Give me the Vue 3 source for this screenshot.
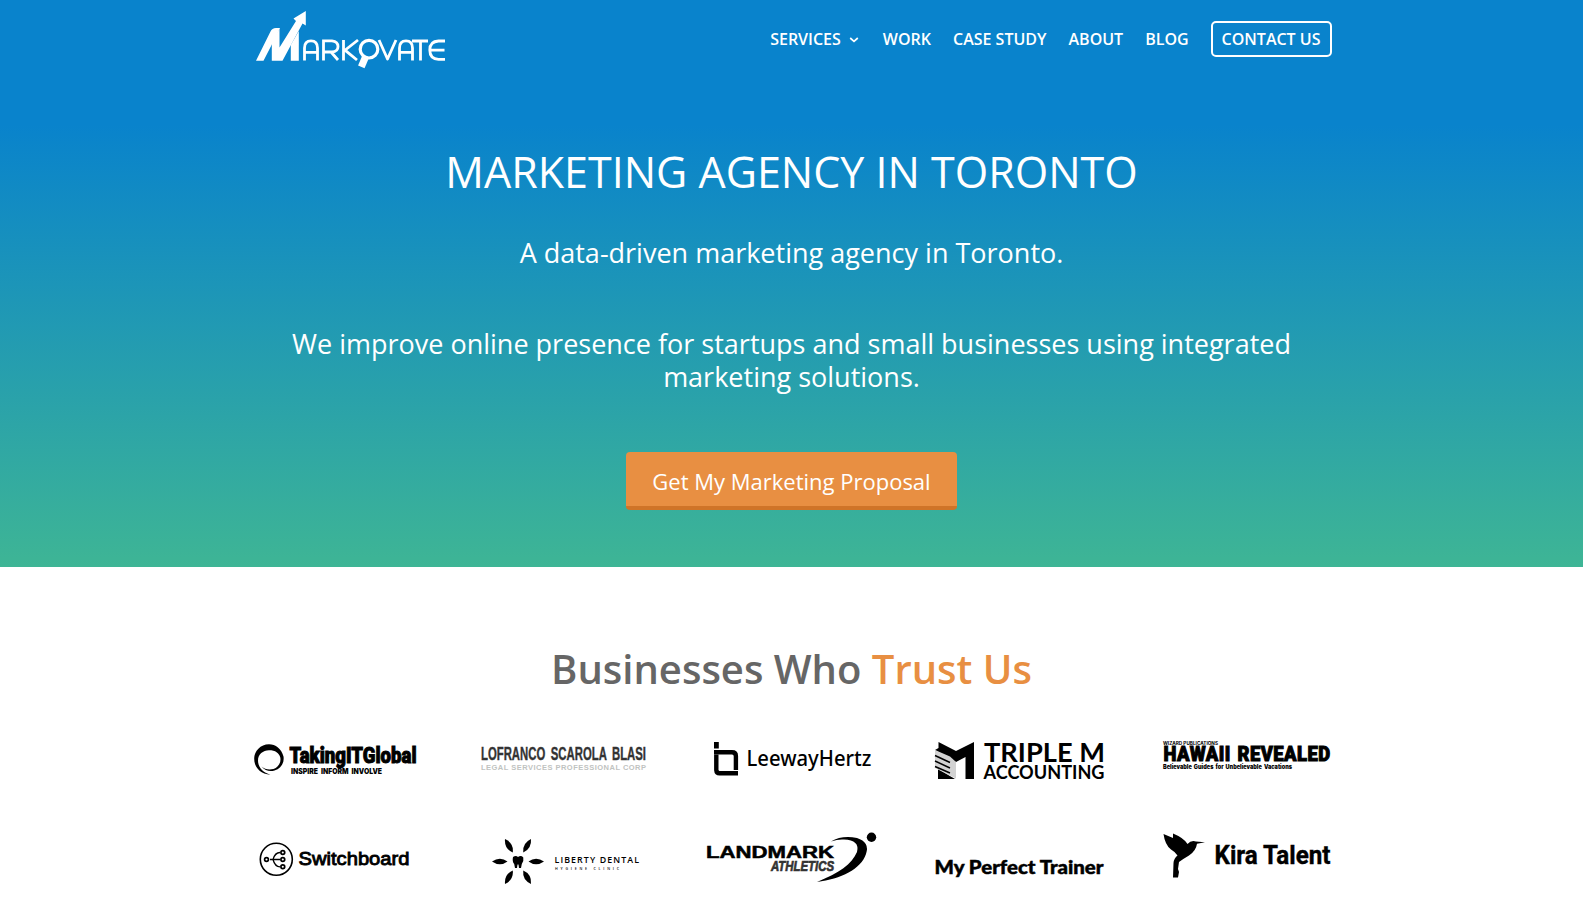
<script setup>
const links = ['WORK', 'CASE STUDY', 'ABOUT', 'BLOG']
const petals = [30, 90, 150, 210, 270, 330]
</script>

<template>
  <main class="page">
    <section class="hero">
      <header class="bar">
        <svg class="brand" width="190" height="60" viewBox="256 10 190 60" fill="none" stroke="#fff" stroke-width="2.8" role="img" aria-label="Markovate">
          <path d="M256 60.800 L270.500 31.500 Q272 28 276 28 L280 28 L277.500 33.500 L263.500 60.800 Z" fill="#fff" stroke="none" />
          <path d="M271.800 60.800 V41.500 L279.500 29 V47.500 L296 21 L293.500 18.500 L305.800 11 V25.500 L302.500 23.500 L282.500 60.800 Z" fill="#fff" stroke="none" />
          <path d="M290.800 60.800 V45 L298.800 31 V60.800 Z" fill="#fff" stroke="none" />
          <path d="M304.500 60.500 V48 Q304.500 40.800 311 40.800 Q317.500 40.800 317.500 48 V60.500 M304.500 52.300 H317.500" />
          <path d="M323.500 60.500 V40.800 H332 Q338 41.500 338 46.500 Q338 51.700 332 52 H324 M331 52 L338 60" />
          <path d="M343.500 40 V60.500 M358 40 L345 50.200 L357 60" />
          <circle cx="369" cy="49.200" r="8.800" stroke-width="3.200" />
          <path d="M365.500 57 L361.300 66.800" stroke-width="7" />
          <path d="M379 40 L387.500 59 L396 40" stroke-linejoin="round" />
          <path d="M399.500 60.500 V48 Q399.500 40.800 406 40.800 Q412.500 40.800 412.500 48 V60.500 M399.500 52.300 H412.500" />
          <path d="M412 41 H428 M420.500 41 V60.500" />
          <path d="M445 41 H438.500 Q429.800 41.500 429.800 50 Q429.800 59 438.500 59.300 H445 M430 50.200 H444.500" />
        </svg>
        <nav class="nav">
          <a class="link services">SERVICES
            <svg class="chev" width="10" height="6" viewBox="0 0 10 6"><path d="M1.200 1 L5 4.300 L8.800 1" fill="none" stroke="#fff" stroke-width="1.700" /></svg>
          </a>
          <a v-for="l in links" :key="l" class="link">{{ l }}</a>
          <a class="link contact">CONTACT US</a>
        </nav>
      </header>
      <h1 class="title">MARKETING AGENCY IN TORONTO</h1>
      <p class="lead">A data-driven marketing agency in Toronto.</p>
      <p class="lead second">We improve online presence for startups and small businesses using integrated<br />marketing solutions.</p>
      <a class="cta">Get My Marketing Proposal</a>
    </section>

    <section class="trust">
      <h2 class="heading">Businesses Who <span class="accent">Trust Us</span></h2>
      <div class="logos">
        <svg class="logo" viewBox="252 735 168 60">
          <path d="M283.500 756.500 C281.500 748.500 275.500 744.200 269 744.200 C260.500 744.200 254.200 751 254.200 758.800 C254.200 767 260 774 270.500 774.700 C263 772.500 258 767.500 258 760.500 C258 754.500 263 750.300 269 750.300 C275.500 750.300 279 753 280.300 757.500 C281.300 763 278 767.500 273.500 769 C268.500 770.200 264.500 769 261.500 766.500 C265 770.800 270 772 274.500 770.500 C281 768.500 284.500 763 283.500 756.500 Z" />
          <text class="impact" x="289.500" y="763" font-size="22.500" textLength="127" lengthAdjust="spacingAndGlyphs">TakingITGlobal</text>
          <text class="heavy" x="291" y="774" font-size="7.800" word-spacing="2" textLength="91" lengthAdjust="spacingAndGlyphs">INSPIRE INFORM INVOLVE</text>
        </svg>

        <svg class="logo" viewBox="480 735 168 60">
          <text class="arial bold thicken" x="481" y="760" font-size="18.500" textLength="165" lengthAdjust="spacingAndGlyphs" word-spacing="4">LOFRANCO SCAROLA BLASI</text>
          <text class="arial bold" x="481" y="770" font-size="7.500" fill="#bfc3c1" textLength="166" letter-spacing="1">LEGAL SERVICES PROFESSIONAL CORP</text>
        </svg>

        <svg class="logo" viewBox="708 735 168 60">
          <path d="M714 742 H718.800 V748.500 H714 Z" />
          <path d="M716.300 754.500 V770 Q716.500 773.200 719.500 773.200 H738" fill="none" stroke="#000" stroke-width="4.400" />
          <path d="M714 752.300 H732 Q735.900 752.300 735.900 756 V770" fill="none" stroke="#000" stroke-width="4.400" />
          <text class="noto" x="746.500" y="765.500" font-size="21" textLength="125" lengthAdjust="spacingAndGlyphs">LeewayHertz</text>
        </svg>

        <svg class="logo" viewBox="936 735 168 60">
          <path d="M938.500 742 L956 751 L974 742 V779 H965.500 V757 L956 762 L935 750 L938.500 748 Z" />
          <path d="M938 769 V779 H955 Z" />
          <path d="M935 750 L950 756.500 L956 762 V778.500 L935 768 Z" fill="#d2d2d2" />
          <path d="M935 755.500 L950 762.500 M935 761 L950 768 M935 766.500 L950 773" stroke="#000" stroke-width="1.500" />
          <text class="lato bold" x="984" y="761.500" font-size="27" textLength="121" lengthAdjust="spacingAndGlyphs">TRIPLE M</text>
          <text class="lato bold" x="983.500" y="778.500" font-size="18.500" textLength="121" lengthAdjust="spacingAndGlyphs">ACCOUNTING</text>
        </svg>

        <svg class="logo" viewBox="1164 735 168 60">
          <text class="inter bold" x="1163" y="745" font-size="4.700" textLength="55" lengthAdjust="spacingAndGlyphs">WIZARD PUBLICATIONS</text>
          <text class="roboto black hawaii" x="1163.500" y="761.300" font-size="20" textLength="167" word-spacing="2" letter-spacing=".5" lengthAdjust="spacingAndGlyphs">HAWAII REVEALED</text>
          <text class="inter black" x="1163" y="769.300" font-size="5.700" word-spacing="1" textLength="129" lengthAdjust="spacingAndGlyphs">Believable Guides for Unbelievable Vacations</text>
        </svg>

        <svg class="logo" viewBox="252 825 168 60">
          <g fill="none" stroke="#000">
            <circle cx="276.300" cy="859.300" r="16" stroke-width="1.600" />
            <g stroke-width="1.700">
              <circle cx="266.500" cy="859.500" r="1.900" />
              <circle cx="282.800" cy="852.500" r="1.900" />
              <circle cx="282.800" cy="859.500" r="1.900" />
              <circle cx="282.800" cy="866.800" r="1.900" />
            </g>
            <path d="M270 859.500 H280 M273 859.500 Q275 852.500 280 852.500 M273 859.500 Q275 866.800 280 866.800" stroke-width="1.300" />
          </g>
          <text class="arial switch" x="298.500" y="865" font-size="19" textLength="111" lengthAdjust="spacingAndGlyphs">Switchboard</text>
        </svg>

        <svg class="logo" viewBox="480 825 168 60">
          <g transform="translate(518 861.500)">
            <path v-for="a in petals" :key="a" :transform="`rotate(${a})`" d="M0 -26 Q5.600 -18 0 -10.500 Q-5.600 -18 0 -26 Z" />
            <path d="M-5 -4.500 Q-2 -6.500 0 -4.500 Q3 -6.500 5.300 -4 Q6 0 3.800 2.500 L3 6.500 H1 L0.500 3 H-0.500 L-1 6.500 H-3 L-3.800 2.500 Q-6 0 -5 -4.500 Z" />
          </g>
          <text class="opens semi" x="554.500" y="863" font-size="8.800" textLength="86" letter-spacing="1.500">LIBERTY DENTAL</text>
          <text class="opens semi" x="555" y="870" font-size="3.600" textLength="66" letter-spacing="2">HYGIENE CLINIC</text>
        </svg>

        <svg class="logo" viewBox="708 825 168 60">
          <text class="arial bold outline" x="706" y="858" font-size="16.800" textLength="128" lengthAdjust="spacingAndGlyphs">LANDMARK</text>
          <text class="arial bold italic" x="771" y="870.500" font-size="14.500" fill="#333" stroke="#333" stroke-width=".7" textLength="63" lengthAdjust="spacingAndGlyphs">ATHLETICS</text>
          <path d="M831 841.500 Q842 835 857 838 Q870 842 866 854 C861 869 841 879 817 882 C839 873 852 864 857 852 Q860 840 844 839.500 Q838 839 831 841.500 Z" />
          <circle cx="871.500" cy="837.300" r="4.700" />
        </svg>

        <svg class="logo" viewBox="936 825 168 60">
          <text class="lato black outline" x="934.500" y="874.300" font-size="19" textLength="169" lengthAdjust="spacingAndGlyphs">My Perfect Trainer</text>
        </svg>

        <svg class="logo" viewBox="1164 825 168 60">
          <path d="M1163.500 834 L1173 838 L1173 833.500 Q1184 838 1187.500 844 Q1191 840 1196 841.500 L1205 842.300 L1197 843.800 Q1196 851 1189 855.500 Q1183 859 1179 862 L1178 869 L1179 872 L1178 877.500 H1173 L1173.500 863 Q1174 858 1177.500 855.500 Q1174 851 1171 849.500 Q1165 845 1163.500 834 Z" />
          <text class="roboto bold kira" x="1214.500" y="863.500" font-size="25" textLength="116" lengthAdjust="spacingAndGlyphs">Kira Talent</text>
        </svg>
      </div>
    </section>
  </main>
</template>

<style>
body { margin: 0; background: #fff; }
</style>

<style scoped>
.page { width: 100%; height: 909px; overflow: hidden; font-family: "Open Sans", sans-serif; }
.hero {
  height: 567px; display: flex; flex-direction: column; align-items: center;
  color: #fff; background: linear-gradient(180deg, #0983cc 125px, #3eb595 567px);
}
.bar { width: 1076px; height: 78px; display: flex; justify-content: space-between; align-items: flex-start; }
.brand { margin: 10px 0 0 2px; }
.nav { display: flex; align-items: center; gap: 22px; height: 78px; margin-right: -2px; }
.link { font-size: 16px; font-weight: 600; line-height: 22px; white-space: nowrap; }
.services { display: flex; align-items: center; gap: 8px; }
.chev { margin: 2px 2px 0 0; }
.contact { box-sizing: border-box; height: 36px; line-height: 32px; padding: 0 9px; border: 2px solid #fff; border-radius: 5px; }
.title { margin: 64px 0 0; font-size: 43px; font-weight: 400; line-height: 60px; white-space: nowrap; }
.lead { margin: 34px 0 0; font-size: 27px; line-height: 33px; text-align: center; white-space: nowrap; }
.second { margin-top: 58px; }
.cta {
  box-sizing: border-box; margin-top: 59px; width: 331px; height: 58px; line-height: 58px; text-align: center;
  font-size: 22px; background: #e88f42; border-bottom: 4px solid #cf7428; border-radius: 4px; white-space: nowrap;
}
.trust { display: flex; flex-direction: column; align-items: center; }
.heading { margin: 77px 0 0; font-size: 40px; line-height: 50px; font-weight: 600; color: #666; white-space: nowrap; }
.accent { color: #e88f42; }
.logos { display: grid; grid-template-columns: repeat(5, 168px); gap: 30px 60px; width: 1080px; margin-top: 41px; }
.logo { display: block; width: 168px; height: 60px; overflow: visible; }
.arial { font-family: "Liberation Sans", sans-serif; }
.lato { font-family: Lato, sans-serif; }
.noto { font-family: "Noto Sans", sans-serif; font-weight: 500; }
.inter { font-family: Inter, sans-serif; }
.opens { font-family: "Open Sans", sans-serif; }
.roboto { font-family: Roboto, sans-serif; }
.impact { font-family: Roboto, sans-serif; font-weight: 900; stroke: #000; stroke-width: 1px; }
.heavy { font-family: Inter, sans-serif; font-weight: 900; }
.bold { font-weight: 700; }
.black { font-weight: 900; }
.semi { font-weight: 600; }
.italic { font-style: italic; }
.outline { stroke: #000; stroke-width: .5px; }
.hawaii { stroke: #000; stroke-width: 1px; }
.switch { stroke: #000; stroke-width: .9px; }
.kira { stroke: #000; stroke-width: .4px; }
.thicken { fill: #333; stroke: #333; stroke-width: .4px; }
</style>
